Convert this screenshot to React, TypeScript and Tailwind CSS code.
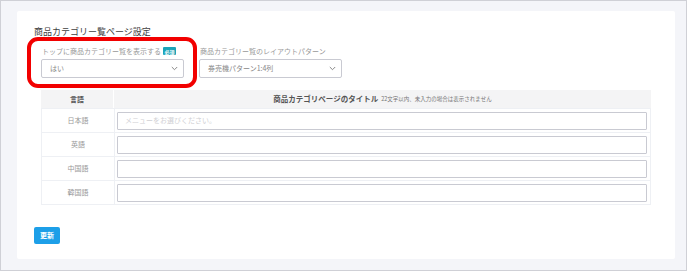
import React from "react";

const font = { fontFamily: '"Noto Sans CJK JP", "Noto Sans", sans-serif' };

function Chevron() {
  return (
    <svg width="7" height="5" viewBox="0 0 7 5" className="shrink-0">
      <path d="M0.8 1 L3.5 3.7 L6.2 1" fill="none" stroke="#888" strokeWidth="1" />
    </svg>
  );
}

function Select({ value }: { value: string }) {
  return (
    <div className="flex h-[19px] w-[143px] items-center justify-between rounded-[2px] border border-[#c9cad2] bg-white pl-[8px] pr-[5px]">
      <span className="text-[7px] leading-none text-[#888]">{value}</span>
      <Chevron />
    </div>
  );
}

const langs = ["日本語", "英語", "中国語", "韓国語"];

export default function App() {
  return (
    <div
      className="relative h-[271px] w-[687px] border border-[#cfd0d6] bg-[#f4f5f9] pl-[16px] pr-[11px] pt-[10px] pb-[11px]"
      style={font}
    >
      <div className="h-[248px] w-[658px] rounded-[2px] bg-white pl-[17px] pt-[15px]">
        <div className="h-[12px] text-[9px] leading-[12px] text-[#3f3f3f]">商品カテゴリー覧ページ設定</div>

        <div className="mt-[8px] flex gap-[15px] pl-[7px]">
          <div className="flex flex-col gap-[3px]">
            <div className="flex h-[10px] items-center gap-[2px] pl-[1px]">
              <span className="text-[7px] leading-[10px] text-[#999]">トップに商品カテゴリー覧を表示する</span>
              <span className="flex h-[8px] items-center rounded-[1px] bg-[#1ba3b8] px-[1.5px] text-[5px] font-bold leading-none text-white">
                必須
              </span>
            </div>
            <Select value="はい" />
          </div>
          <div className="flex flex-col gap-[3px]">
            <div className="flex h-[10px] items-center pl-[1px]">
              <span className="text-[7px] leading-[10px] text-[#999]">商品カテゴリー覧のレイアウトパターン</span>
            </div>
            <Select value="券売機パターン1:4列" />
          </div>
        </div>

        <div className="ml-[7px] mt-[12px] w-[610px] border-b border-[#eef0f4]">
          <div className="grid h-[18px] grid-cols-[73px_1fr] bg-[#f4f4f5]">
            <div className="flex items-center justify-center border-r border-white text-[7px] font-bold text-[#555]">言語</div>
            <div className="flex items-center justify-center gap-[3px]">
              <span className="text-[7.5px] font-bold text-[#555]">商品カテゴリページのタイトル</span>
              <span className="text-[5.5px] text-[#777]">22文字以内、未入力の場合は表示されません</span>
            </div>
          </div>
          {langs.map((l, i) => (
            <div key={l} className="grid h-[24px] grid-cols-[73px_1fr] border-l border-r border-t border-[#eef0f4]">
              <div className="flex items-center justify-center border-r border-[#eef0f4] text-[7px] text-[#999]">{l}</div>
              <div className="flex items-center pl-[2px] pr-[3px]">
                <div className="flex h-[18px] w-full items-center rounded-[1px] border border-[#c9cad2] bg-white pl-[7px]">
                  {i === 0 && <span className="text-[7px] text-[#d0d0d4]">メニューをお選びください。</span>}
                </div>
              </div>
            </div>
          ))}
        </div>

        <div className="mt-[22px] flex h-[17px] w-[26px] items-center justify-center rounded-[2px] bg-[#1d9fe8] text-[7px] font-bold text-white">
          更新
        </div>
      </div>

      <div className="pointer-events-none absolute left-[26px] top-[36px] h-[51px] w-[170px] rounded-[11px] border-[4px] border-[#f20000]" />
    </div>
  );
}
